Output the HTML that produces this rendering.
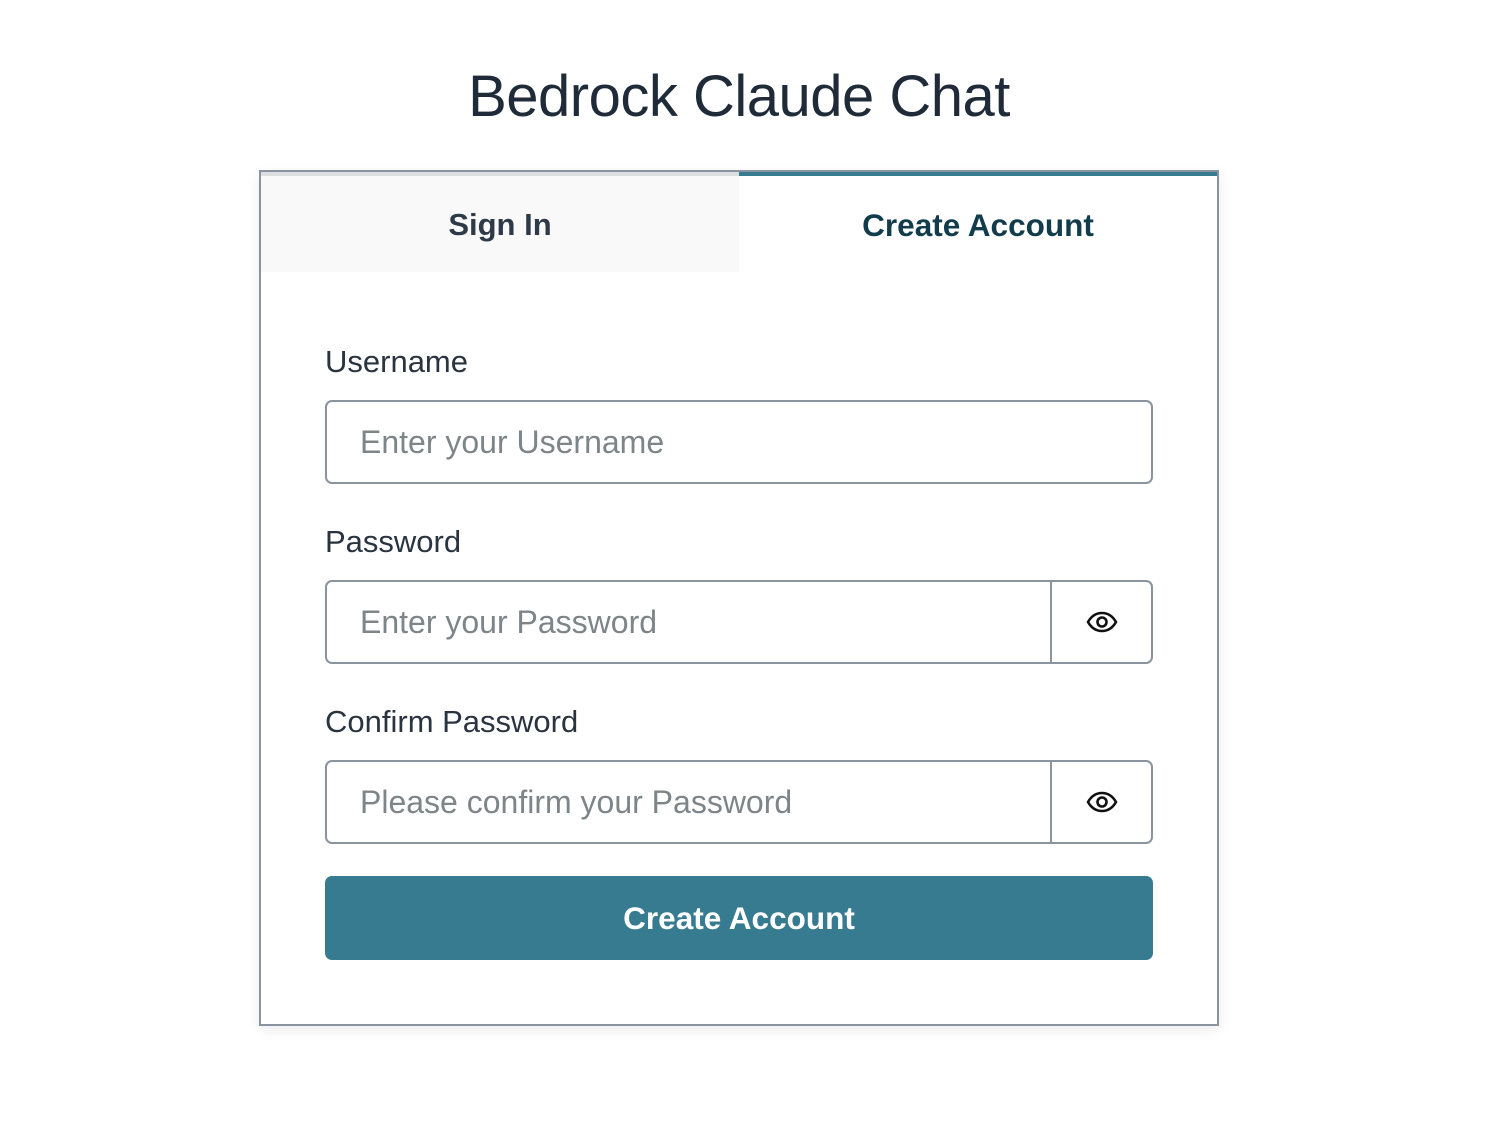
<!DOCTYPE html>
<html><head><style>
*{box-sizing:border-box;margin:0;padding:0}
body{width:1494px;height:1148px;background:#fff;font-family:"Liberation Sans",sans-serif;color:#2a3441;position:relative}
h1{position:absolute;top:63px;left:0;width:1478px;text-align:center;font-weight:400;font-size:58px;color:#202b39;letter-spacing:-0.5px}
.card{position:absolute;left:259px;top:170px;width:960px;height:856px;border:2px solid #89949f;box-shadow:0 4px 12px rgba(0,0,0,.08)}
.tab{position:absolute;top:0;height:100px;width:478px;text-align:center;font-weight:700;font-size:31px;line-height:98px;border-top:4px solid}
.t1{left:0;background:#f9f9f9;border-color:#dcdfe1;color:#2f3a48}
.t2{left:478px;background:#fff;border-color:#377b91;color:#123c4c;font-size:31.5px}
.lbl{position:absolute;left:64px;font-size:31px;color:#2a3441}
.in{position:absolute;left:64px;width:828px;height:84px;border:2px solid #89949f;border-radius:7px;font-size:32px;color:#7e8588;padding-left:33px;line-height:80px}
.eye{position:absolute;right:0;top:-2px;width:101px;height:84px;border-left:2px solid #89949f;display:flex;align-items:center;justify-content:center}
.btn{position:absolute;left:64px;top:704px;width:828px;height:84px;background:#377b91;border-radius:7px;color:#fff;font-weight:700;font-size:31.5px;text-align:center;line-height:84px}
</style></head><body>
<h1>Bedrock Claude Chat</h1>
<div class="card">
<div class="tab t1">Sign In</div>
<div class="tab t2">Create Account</div>
<div class="lbl" style="top:172px">Username</div>
<div class="in" style="top:228px">Enter your Username</div>
<div class="lbl" style="top:352px">Password</div>
<div class="in" style="top:408px">Enter your Password<div class="eye"><svg width="32" height="22" viewBox="0 0 32 22"><path d="M2 11C6 4 11 2 16 2s10 2 14 9c-4 7-9 9-14 9S6 18 2 11z" fill="none" stroke="#111" stroke-width="2.6"/><circle cx="16" cy="11" r="4.5" fill="none" stroke="#111" stroke-width="2.6"/></svg></div></div>
<div class="lbl" style="top:532px">Confirm Password</div>
<div class="in" style="top:588px">Please confirm your Password<div class="eye"><svg width="32" height="22" viewBox="0 0 32 22"><path d="M2 11C6 4 11 2 16 2s10 2 14 9c-4 7-9 9-14 9S6 18 2 11z" fill="none" stroke="#111" stroke-width="2.6"/><circle cx="16" cy="11" r="4.5" fill="none" stroke="#111" stroke-width="2.6"/></svg></div></div>
<div class="btn">Create Account</div>
</div>
</body></html>
